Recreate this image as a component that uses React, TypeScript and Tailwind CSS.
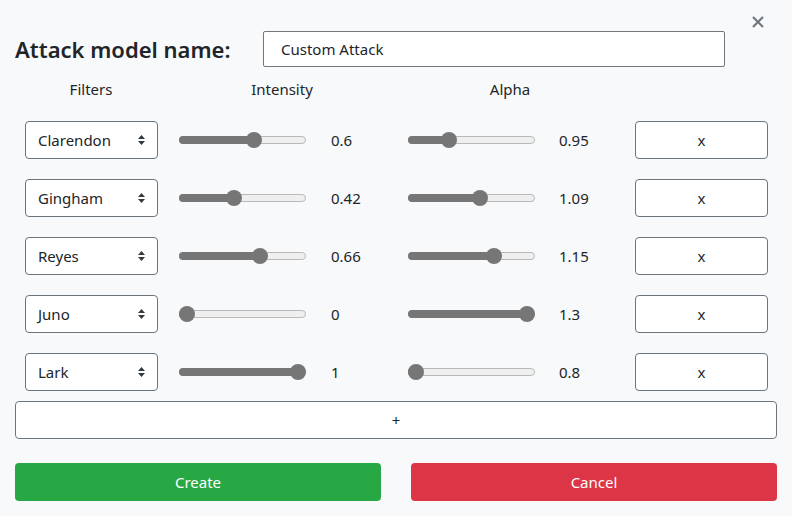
import * as React from "react";

type Row = { filter: string; intensity: number; alpha: number };

const ROWS: Row[] = [
    { filter: "Clarendon", intensity: 0.6, alpha: 0.95 },
    { filter: "Gingham", intensity: 0.42, alpha: 1.09 },
    { filter: "Reyes", intensity: 0.66, alpha: 1.15 },
    { filter: "Juno", intensity: 0, alpha: 1.3 },
    { filter: "Lark", intensity: 1, alpha: 0.8 },
];

function Slider({ value, min, max }: { value: number; min: number; max: number }) {
    const pct = (value - min) / (max - min);
    // thumb center travels from 8px to (width - 8px)
    const pos = 8 + pct * 111;
    return (
        <div className="relative h-[16px] w-[127px]">
            <div className="absolute left-0 right-0 top-[4px] h-[8px] rounded-full border border-[#b9b9b9] bg-[#efefef]" />
            <div
                className="absolute left-0 top-[4px] h-[8px] rounded-full bg-[#767676]"
                style={{ width: pos + 2 }}
            />
            <div
                className="absolute top-0 h-[16px] w-[16px] rounded-full bg-[#767676]"
                style={{ left: pos - 8 }}
            />
        </div>
    );
}

function SelectArrows() {
    return (
        <svg width="9" height="12" viewBox="0 0 9 12" className="text-[#343a40]">
            <path d="M4.5 1 L8 5 L1 5 Z" fill="currentColor" />
            <path d="M4.5 11 L8 7 L1 7 Z" fill="currentColor" />
        </svg>
    );
}

export default function App() {
    return (
        <div
            className="h-[516px] w-[792px] bg-[#f8f9fa] text-[#212529]"
            style={{ fontFamily: '"Noto Sans", "Open Sans", sans-serif' }}
        >
            <div className="flex h-[31px] justify-end pr-[28px] pt-[16px]">
                <svg width="12" height="12" viewBox="0 0 12 12">
                    <path d="M1 1 L11 11 M11 1 L1 11" stroke="#6c757d" strokeWidth="2" />
                </svg>
            </div>

            <div className="flex h-[36px] items-center pl-[15px]">
                <div className="w-[248px] text-[22px] font-semibold">Attack model name:</div>
                <div className="flex h-[36px] w-[462px] items-center rounded-[2px] border border-[#767676] bg-white pl-[17px] text-[15px]">
                    Custom Attack
                </div>
            </div>

            <div className="mt-[13px] flex h-[19px] items-center pl-[25px] text-[15px]">
                <div className="w-[132px] text-center">Filters</div>
                <div className="w-[250px] text-center">Intensity</div>
                <div className="w-[206px] text-center">Alpha</div>
            </div>

            <div className="mt-[22px] flex flex-col gap-[20px] px-[15px]">
                {ROWS.map((r) => (
                    <div key={r.filter} className="flex h-[38px] items-center">
                        <div className="ml-[10px] flex h-[38px] w-[133px] items-center justify-between rounded-[4px] border border-[#6c757d] bg-white pl-[12px] pr-[11px] text-[15px]">
                            <span>{r.filter}</span>
                            <SelectArrows />
                        </div>
                        <div className="ml-[21px]">
                            <Slider value={r.intensity} min={0} max={1} />
                        </div>
                        <div className="ml-[25px] w-[77px] text-[15px]">{r.intensity}</div>
                        <Slider value={r.alpha} min={0.8} max={1.3} />
                        <div className="ml-[24px] w-[76px] text-[15px]">{r.alpha}</div>
                        <button className="flex h-[38px] w-[133px] items-center justify-center rounded-[4px] border border-[#6c757d] bg-white text-[15px]">
                            x
                        </button>
                    </div>
                ))}
            </div>

            <div className="mt-[10px] px-[15px]">
                <button className="flex h-[38px] w-full items-center justify-center rounded-[4px] border border-[#6c757d] bg-white text-[15px]">
                    +
                </button>
            </div>

            <div className="mt-[24px] flex justify-between px-[15px]">
                <button className="h-[38px] w-[366px] rounded-[4px] bg-[#28a745] text-[15px] text-white">
                    Create
                </button>
                <button className="h-[38px] w-[366px] rounded-[4px] bg-[#dc3545] text-[15px] text-white">
                    Cancel
                </button>
            </div>
        </div>
    );
}
